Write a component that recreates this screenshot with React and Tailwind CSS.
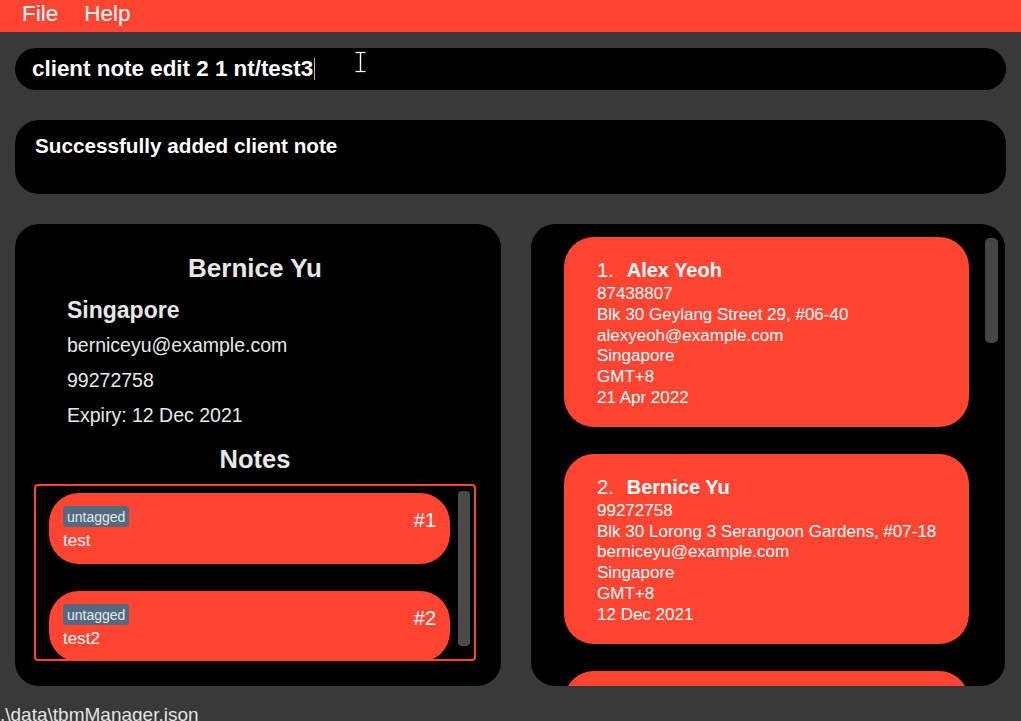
import React from "react";

const F = { fontFamily: '"Liberation Sans", Arial, sans-serif' };

function Note({ n, text }) {
  return (
    <div className="flex h-[71px] w-[401px] shrink-0 items-start justify-between rounded-[30px] bg-[#ff4532] px-[14px] pt-[13px]">
      <div className="flex flex-col items-start">
        <div className="h-[21px] rounded-[3px] bg-[#526a80] px-[4px] text-[14px] leading-[23px] text-[#e4e8ec]">untagged</div>
        <div className="mt-[3px] text-[17px] leading-[22px] text-white">{text}</div>
      </div>
      <div className="mt-[2px] text-[20px] leading-[24px] text-white">#{n}</div>
    </div>
  );
}

function Person({ idx, name, lines }) {
  return (
    <div className="w-[405px] shrink-0 rounded-[30px] bg-[#ff4532] pl-[33px] pt-[21px] pb-[18px] text-white">
      <div className="flex text-[20px] leading-[24px]">
        <span className="mr-[13px]">{idx}.</span>
        <span className="font-bold">{name}</span>
      </div>
      <div className="mt-[2px] text-[17px] leading-[20.8px]">
        {lines.map((l, i) => (
          <div key={i}>{l}</div>
        ))}
      </div>
    </div>
  );
}

export default function App() {
  return (
    <div style={F} className="flex h-[721px] w-[1021px] flex-col overflow-hidden bg-[#393939] text-[#e8e8e8]">
      <div className="flex h-[32px] shrink-0 items-start bg-[#ff4532] pl-[22px] text-[22.5px] leading-[28px] text-white">
        <span>File</span>
        <span className="ml-[26px]">Help</span>
      </div>

      <div className="mx-[15px] mt-[16px] relative flex h-[42px] shrink-0 items-center rounded-full bg-black pl-[17px]">
        <span className="text-[22.4px] font-bold leading-[42px] text-white">client note edit 2 1 nt/test3</span>
        <span className="ml-[1px] h-[22px] w-[1px] bg-[#bbbbbb]"></span>
        <svg className="absolute left-[339px] top-[3px]" width="13" height="22" viewBox="0 0 13 22">
          <path d="M1.5 1.5h10M6.5 1.5v19M1.5 20.5h10" stroke="#222" strokeWidth="3" fill="none" />
          <path d="M1.5 1.5h10M6.5 1.5v19M1.5 20.5h10" stroke="#fff" strokeWidth="1.2" fill="none" />
        </svg>
      </div>

      <div className="mx-[15px] mt-[30px] h-[74px] shrink-0 rounded-[24px] bg-black pl-[20px] pt-[14px]">
        <div className="text-[20.7px] font-bold leading-[24px] text-white">Successfully added client note</div>
      </div>

      <div className="mt-[30px] flex h-[462px] shrink-0 pl-[15px]">
        <div className="flex w-[486px] flex-col overflow-hidden rounded-[24px] bg-black pl-[19px] pr-[25px] pt-[29px]">
          <div className="text-center text-[26px] font-bold leading-[30px]">Bernice Yu</div>
          <div className="ml-[33px] mt-[13px] text-[23px] font-bold leading-[28px]">Singapore</div>
          <div className="ml-[33px] mt-[4px] text-[19.5px] leading-[35px]">berniceyu@example.com</div>
          <div className="ml-[33px] text-[19.5px] leading-[35px]">99272758</div>
          <div className="ml-[33px] text-[19.5px] leading-[35px]">Expiry: 12 Dec 2021</div>
          <div className="mt-[11px] text-center text-[25.5px] font-bold leading-[30px]">Notes</div>
          <div className="relative mt-[10px] h-[177px] overflow-hidden rounded-[4px] border-2 border-[#ff4532]">
            <div className="flex flex-col gap-[27px] pl-[13px] pt-[7px]">
              <Note n={1} text="test" />
              <Note n={2} text="test2" />
            </div>
            <div className="absolute right-[4px] top-[5px] h-[155px] w-[12px] rounded-[4px] bg-[#4a4a4a]"></div>
          </div>
        </div>

        <div className="relative ml-[30px] flex w-[474px] flex-col gap-[27px] overflow-hidden rounded-[24px] bg-black pl-[33px] pt-[13px]">
          <Person
            idx={1}
            name="Alex Yeoh"
            lines={["87438807", "Blk 30 Geylang Street 29, #06-40", "alexyeoh@example.com", "Singapore", "GMT+8", "21 Apr 2022"]}
          />
          <Person
            idx={2}
            name="Bernice Yu"
            lines={["99272758", "Blk 30 Lorong 3 Serangoon Gardens, #07-18", "berniceyu@example.com", "Singapore", "GMT+8", "12 Dec 2021"]}
          />
          <Person idx={3} name="Charlotte Oliveiro" lines={["93210283", "Blk 11 Ang Mo Kio Street 74, #11-04", "charlotte@example.com", "Singapore", "GMT+8", "1 Jan 2022"]} />
          <div className="absolute right-[7px] top-[14px] h-[105px] w-[13px] rounded-[5px] bg-[#454545]"></div>
        </div>
      </div>

      <div className="mt-[18px] shrink-0 text-[19px] leading-[22px] text-[#e4e4e4]">.\data\tbmManager.json</div>
    </div>
  );
}
